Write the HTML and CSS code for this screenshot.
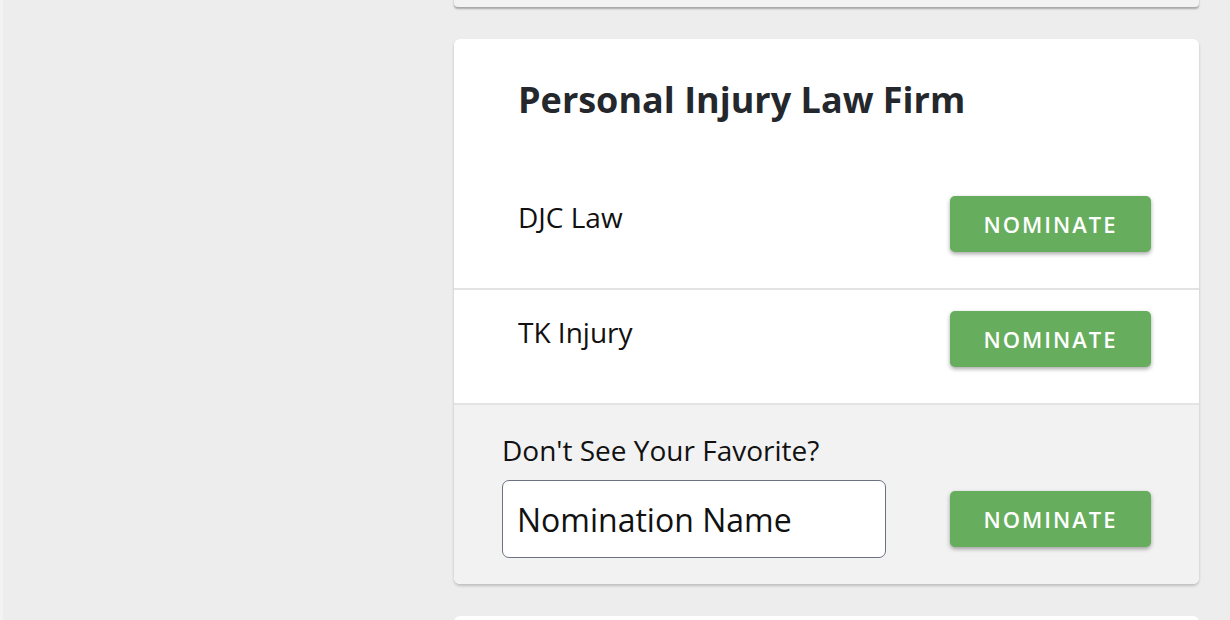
FILE: index.html
```html
<!DOCTYPE html>
<html>
<head>
<meta charset="utf-8">
<link rel="stylesheet" href="styles.css">
</head>
<body>
<div class="frame">
  <div class="edge"></div>
  <div class="column">
    <div class="card card-prev"></div>
    <div class="card">
      <h2 class="card-title">Personal Injury Law Firm</h2>
      <div class="row">
        <span class="row-name">DJC Law</span>
        <button class="btn">NOMINATE</button>
      </div>
      <div class="row">
        <span class="row-name">TK Injury</span>
        <button class="btn">NOMINATE</button>
      </div>
      <div class="custom">
        <label class="custom-label">Don't See Your Favorite?</label>
        <div class="custom-line">
          <input class="custom-input" type="text" placeholder="Nomination Name">
          <button class="btn">NOMINATE</button>
        </div>
      </div>
    </div>
    <div class="card card-next"></div>
  </div>
</div>
</body>
</html>
```
FILE: styles.css
```css
* { box-sizing: border-box; }
html, body { margin: 0; padding: 0; }
body {
  background: #ededed;
  font-family: "Open Sans", "Noto Sans", sans-serif;
  color: #111;
  overflow: hidden;
  height: 620px;
}
.frame {
  display: flex;
  height: 620px;
  overflow: hidden;
}
.edge {
  width: 3px;
  background: #f3f3f3;
  flex: none;
}
.column {
  margin-left: 451px;
  width: 745px;
  display: flex;
  flex-direction: column;
  gap: 32px;
}
.card {
  background: #fff;
  border-radius: 6px;
  overflow: hidden;
  flex: none;
  box-shadow: 0 2px 3px rgba(0,0,0,0.2);
}
.card-prev {
  margin-top: -20px;
  height: 27px;
  background: #f2f2f2;
  border-radius: 0 0 4px 4px;
  box-shadow: 0 2px 2px rgba(0,0,0,0.3);
}
.card-next {
  height: 40px;
  box-shadow: none;
}
.card-title {
  margin: 0;
  padding: 37px 64px 0 64px;
  height: 136px;
  font-size: 36px;
  font-weight: 700;
  color: #24282c;
  line-height: 48px;
}
.row {
  display: flex;
  align-items: center;
  justify-content: space-between;
  height: 115px;
  padding: 22px 48px 37px 64px;
  border-bottom: 2px solid #e3e3e3;
}
.row-name {
  font-size: 28px;
  color: #111;
  margin-top: -14px;
}
.btn {
  width: 201px;
  height: 56px;
  flex: none;
  border: none;
  border-radius: 5px;
  background: #66ad5e;
  color: #fff;
  font-family: "Open Sans", "Noto Sans", sans-serif;
  font-size: 22px;
  font-weight: 600;
  letter-spacing: 2px;
  box-shadow: 0 2px 4px rgba(0,0,0,0.35);
  padding: 0;
}
.custom {
  background: #f2f2f2;
  padding: 27px 48px 0 48px;
  height: 179px;
}
.custom-label {
  display: block;
  font-size: 28px;
  color: #111;
  line-height: 36px;
}
.custom-line {
  display: flex;
  justify-content: space-between;
  align-items: center;
  margin-top: 12px;
}
.custom-input {
  width: 384px;
  height: 78px;
  border: 1.5px solid #6b7280;
  border-radius: 7px;
  background: #fff;
  padding: 0 14px;
  font-family: "Open Sans", "Noto Sans", sans-serif;
  font-size: 32px;
  color: #111;
  outline: none;
}
.custom-input::placeholder { color: #111; opacity: 1; }
```
